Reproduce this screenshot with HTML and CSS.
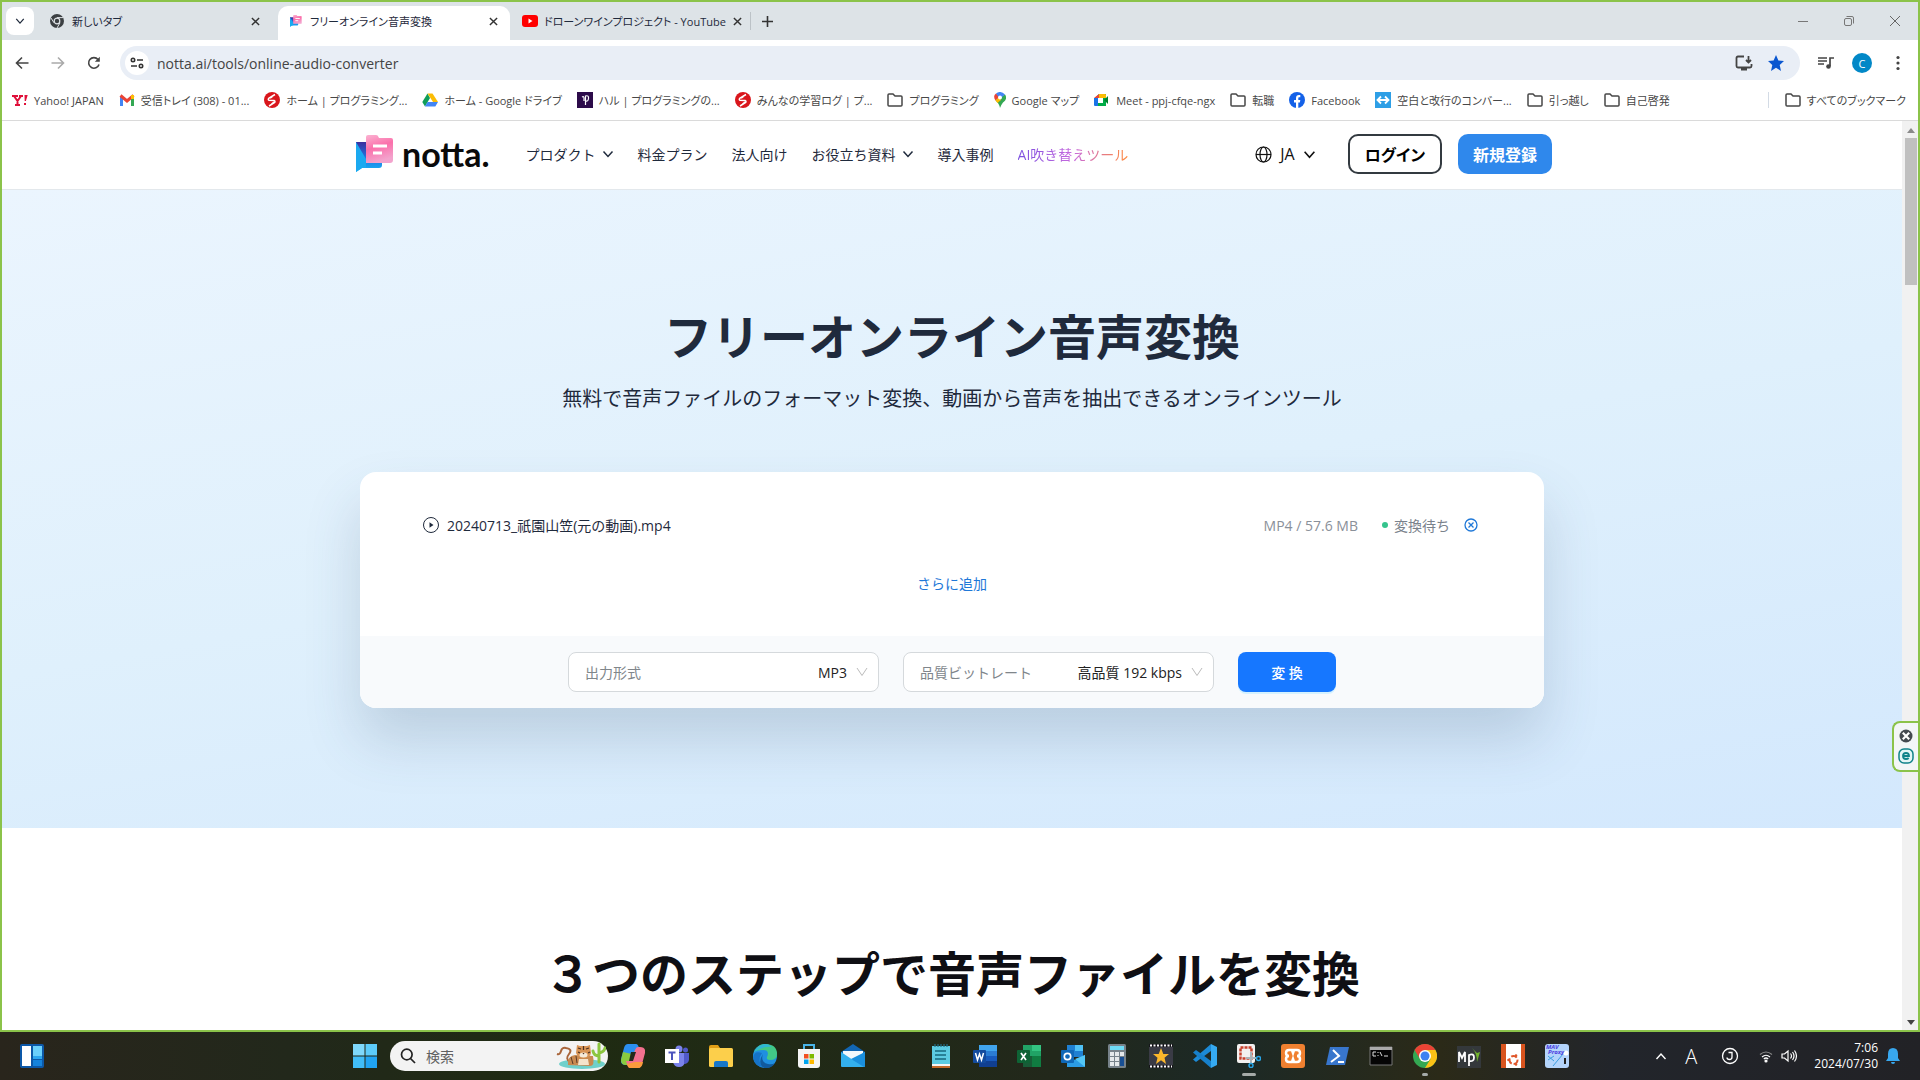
FILE: index.html
```html
<!DOCTYPE html>
<html lang="ja">
<head>
    <meta charset="UTF-8">
    <meta name="viewport" content="width=device-width, initial-scale=1.0">
    <title>フリーオンライン音声変換</title>
    <link rel="stylesheet" href="styles.css">
</head>
<body>
    <svg class="defs" aria-hidden="true">
        <symbol id="i-close" viewBox="0 0 10 10"><path d="M1 1l8 8M9 1l-8 8" stroke="#333" stroke-width="1.6"/></symbol>
        <symbol id="i-chevron" viewBox="0 0 12 12"><path d="M1.500 3.500l4.500 5 4.500-5" fill="none" stroke="currentColor" stroke-width="1.500"/></symbol>
        <symbol id="i-folder" viewBox="0 0 16 16"><path d="M1 3q0-1 1-1h4l2 2h6q1 0 1 1v8q0 1-1 1H2q-1 0-1-1z" fill="none" stroke="#474747" stroke-width="1.500"/></symbol>
        <symbol id="i-progate" viewBox="0 0 16 16"><circle cx="8" cy="8" r="8" fill="#d9161c"/><path d="M11 2.500L5 6q-1.500 1.500 0 2.300l5 .2q2 1 0 2.500L5 14M8.500 4.500L6.500 6M10 10L7.500 12" fill="none" stroke="#fff" stroke-width="1.500"/></symbol>
        <symbol id="i-notta" viewBox="0 0 38 38">
            <linearGradient id="nb" x2="0" y2="1"><stop offset="0" stop-color="#3d2e9e"/><stop offset=".6" stop-color="#1d7fe8"/><stop offset="1" stop-color="#19b5f2"/></linearGradient>
            <linearGradient id="np" x2="0.300" y2="1"><stop offset="0" stop-color="#fbb3d2"/><stop offset=".5" stop-color="#fb70ab"/><stop offset="1" stop-color="#f3a3cd"/></linearGradient>
            <path d="M0 7h26v23q0 3-3 3H6l-6 4z" fill="url(#nb)"/>
            <path d="M0 7l10 17v9H6l-6 4z" fill="#1ba9f0"/>
            <path d="M10 2q0-2 2-2h8q2 0 2.500 2l.5 1h12q2 0 2 2v20q0 3-3 3H10z" fill="url(#np)"/>
            <path d="M17 11h14M17 18h9" stroke="#fff" stroke-width="3"/>
        </symbol>
    </svg>

    <div class="window">
        <div class="tabstrip">
            <button class="tab-search" aria-label="タブを検索"><svg width="10" height="10"><use href="#i-chevron"/></svg></button>
            <div class="tab">
                <svg width="14" height="14" viewBox="0 0 14 14"><circle cx="7" cy="7" r="7" fill="#3c4043"/><circle cx="7" cy="7" r="2.800" fill="#3c4043" stroke="#dfe3e7" stroke-width="1.200"/><path d="M7 3.600h6M4 8.800L1 4M10 8.800L7 14" stroke="#dfe3e7"/></svg>
                <span>新しいタブ</span>
                <button aria-label="閉じる"><svg width="9" height="9"><use href="#i-close"/></svg></button>
            </div>
            <div class="tab active">
                <svg width="12" height="12"><use href="#i-notta"/></svg>
                <span>フリーオンライン音声変換</span>
                <button aria-label="閉じる"><svg width="9" height="9"><use href="#i-close"/></svg></button>
            </div>
            <div class="tab last">
                <svg width="16" height="14" viewBox="0 0 16 14"><rect y="1" width="16" height="12" rx="3" fill="#f00"/><path d="M6.500 4.500v5l4-2.500z" fill="#fff"/></svg>
                <span>ドローンワインプロジェクト - YouTube</span>
                <button aria-label="閉じる"><svg width="9" height="9"><use href="#i-close"/></svg></button>
            </div>
            <button class="new-tab" aria-label="新しいタブ"><svg width="11" height="11" viewBox="0 0 11 11"><path d="M5.500 0v11M0 5.500h11" stroke="#333" stroke-width="1.600"/></svg></button>
            <div class="window-controls">
                <button aria-label="最小化"><svg width="12" height="12" viewBox="0 0 12 12"><path d="M1 6.500h10" stroke="#777"/></svg></button>
                <button aria-label="元に戻す"><svg width="12" height="12" viewBox="0 0 12 12" fill="none" stroke="#777"><rect x="1.500" y="3.500" width="7" height="7" rx="1.500"/><path d="M3.500 1.500H9q1.500 0 1.500 1.500v5.500"/></svg></button>
                <button aria-label="閉じる"><svg width="12" height="12" viewBox="0 0 12 12"><path d="M1 1l10 10M11 1L1 11" stroke="#666"/></svg></button>
            </div>
        </div>

        <div class="toolbar">
            <button aria-label="戻る"><svg width="14" height="14" viewBox="0 0 14 14" fill="none" stroke="#444" stroke-width="1.600"><path d="M13.500 7H1.500M7 1.500L1.500 7 7 12.500"/></svg></button>
            <button aria-label="進む"><svg width="14" height="14" viewBox="0 0 14 14" fill="none" stroke="#aaa" stroke-width="1.600"><path d="M.5 7h12M7 1.500L12.500 7 7 12.500"/></svg></button>
            <button aria-label="再読み込み"><svg width="14" height="14" viewBox="0 0 14 14"><path d="M12 8.500A5.300 5.300 0 1 1 11 3.500" fill="none" stroke="#444" stroke-width="1.600"/><path d="M12.800.8v5h-5z" fill="#444"/></svg></button>
            <div class="omnibox">
                <span class="tune"><svg width="14" height="12" viewBox="0 0 14 12" fill="none" stroke="#333" stroke-width="1.600"><circle cx="3" cy="3" r="1.700"/><path d="M7 3h6M1 9h6"/><circle cx="11" cy="9" r="1.700"/></svg></span>
                <input type="text" aria-label="アドレス" value="notta.ai/tools/online-audio-converter">
                <button aria-label="インストール"><svg width="18" height="16" viewBox="0 0 18 16" fill="none" stroke="#444" stroke-width="1.800"><path d="M9 1.500H3q-1.500 0-1.500 1.500v8q0 1.500 1.500 1.500h12q1.500 0 1.500-1.500V9M13.500 1v6M11 5l2.500 2.500L16 5M6 14.500h6"/></svg></button>
                <button aria-label="ブックマーク"><svg width="16" height="16" viewBox="0 0 16 16"><path d="M8 0l2.400 5.500 5.600.5-4.300 3.900L13 16 8 12.700 3 16l1.300-6.100L0 6l5.600-.5z" fill="#0b57d0"/></svg></button>
            </div>
            <button aria-label="メディア"><svg width="16" height="14" viewBox="0 0 16 14"><path d="M0 2h9M0 5h9M0 8h6M12 10V2h4" fill="none" stroke="#444" stroke-width="1.700"/><circle cx="10.500" cy="10.500" r="2.300" fill="#444"/></svg></button>
            <button class="avatar">C</button>
            <button class="menu" aria-label="メニュー"><svg width="4" height="16" viewBox="0 0 4 16" fill="#444"><circle cx="2" cy="2.500" r="1.600"/><circle cx="2" cy="8" r="1.600"/><circle cx="2" cy="13.500" r="1.600"/></svg></button>
        </div>

        <nav class="bookmarks">
            <a href="#"><svg width="16" height="16" viewBox="0 0 16 16"><path d="M0 4h6M2 4l3.500 5L9 4M7 4h4M5.500 8v5M3 13h5" fill="none" stroke="#e0103a" stroke-width="2"/><path d="M12.500 3h3.200l-1.800 6h-1.200zM12 11h2v2h-2z" fill="#e0103a"/></svg>Yahoo! JAPAN</a>
            <a href="#"><svg width="16" height="16" viewBox="0 0 16 16" fill="none" stroke-width="3"><path d="M2.500 14V4" stroke="#4285f4"/><path d="M13.500 14V4" stroke="#34a853"/><path d="M1.500 3.500L8 9l6.500-5.500" stroke="#ea4335"/><path d="M13.500 3v4" stroke="#fbbc04"/></svg>受信トレイ (308) - 01...</a>
            <a href="#"><svg width="16" height="16"><use href="#i-progate"/></svg>ホーム | プログラミング...</a>
            <a href="#"><svg width="16" height="16" viewBox="0 0 16 16"><path d="M5.500 1.500L8 6 3 14.500.3 10z" fill="#0f9d58"/><path d="M5.500 1.500h5L16 10h-5z" fill="#fbbc04"/><path d="M5.500 10H16l-2.700 4.500H3z" fill="#4285f4"/></svg>ホーム - Google ドライブ</a>
            <a href="#"><svg width="16" height="16" viewBox="0 0 16 16"><path d="M0 0h16v16H0z" fill="#2c0b4a"/><path d="M5 5q2-1 2 1v3m1.500 4V4Q12 3 11.500 6.500T8.500 9" fill="none" stroke="#fff" stroke-width="1.200"/></svg>ハル | プログラミングの...</a>
            <a href="#"><svg width="16" height="16"><use href="#i-progate"/></svg>みんなの学習ログ | プ...</a>
            <a href="#"><svg width="16" height="16"><use href="#i-folder"/></svg>プログラミング</a>
            <a href="#"><svg width="12" height="16" viewBox="0 0 12 16"><path d="M6 16Q5 11 1.500 8.500L6 5l5-2.500Q14 7 9 10.500 7 13 6 16z" fill="#34a853"/><path d="M1.500 8.500Q-1.500 4 2 1.500L6 5z" fill="#ea4335"/><path d="M2 1.500Q6.500-2 11 2.500L6 7z" fill="#4285f4"/><path d="M1.500 8.500L5 5l2 3-3.500 3z" fill="#fbbc04"/><circle cx="6" cy="5.500" r="2" fill="#fff"/></svg>Google マップ</a>
            <a href="#"><svg width="16" height="16" viewBox="0 0 16 16"><path d="M5 2h7v12H1V6z" fill="#00ac47"/><path d="M0 6h4v8H1q-1 0-1-1z" fill="#1a73e8"/><path d="M5 2v4H0z" fill="#ea4335"/><path d="M5 2h6q1 0 1 1v3H5z" fill="#fbbc04"/><path d="M4 6h5v5H4z" fill="#fff"/><path d="M10 8l4-4v8z" fill="#00832d"/></svg>Meet - ppj-cfqe-ngx</a>
            <a href="#"><svg width="16" height="16"><use href="#i-folder"/></svg>転職</a>
            <a href="#"><svg width="16" height="16" viewBox="0 0 16 16"><circle cx="8" cy="8" r="8" fill="#1461e8"/><path d="M7 16v-5.500H5V8h2V6.200Q7 3 10 3h1.300v2.200H10Q9.300 5.200 9.300 6v2h2l-.4 2.500H9.300V16z" fill="#fff"/></svg>Facebook</a>
            <a href="#"><svg width="16" height="16" viewBox="0 0 16 16"><path d="M0 0h16v16H0z" fill="#2e9fe6"/><path d="M3 8h10M6 4.500L2.500 8 6 11.500M10 4.500L13.500 8 10 11.500" fill="none" stroke="#fff" stroke-width="1.800"/></svg>空白と改行のコンバー...</a>
            <a href="#"><svg width="16" height="16"><use href="#i-folder"/></svg>引っ越し</a>
            <a href="#"><svg width="16" height="16"><use href="#i-folder"/></svg>自己啓発</a>
            <a href="#" class="all"><svg width="16" height="16"><use href="#i-folder"/></svg>すべてのブックマーク</a>
        </nav>

        <div class="viewport">
            <div class="page">
                <header class="site-header">
                    <div class="header-inner">
                        <a href="#" class="logo"><svg width="38" height="38"><use href="#i-notta"/></svg>notta.</a>
                        <nav class="site-nav">
                            <a href="#">プロダクト<svg width="12" height="12"><use href="#i-chevron"/></svg></a>
                            <a href="#">料金プラン</a>
                            <a href="#">法人向け</a>
                            <a href="#">お役立ち資料<svg width="12" height="12"><use href="#i-chevron"/></svg></a>
                            <a href="#">導入事例</a>
                            <a href="#" class="dubbing">AI吹き替えツール</a>
                        </nav>
                        <button class="lang"><svg width="17" height="17" viewBox="0 0 17 17" fill="none" stroke="#111" stroke-width="1.200"><circle cx="8.500" cy="8.500" r="7.500"/><ellipse cx="8.500" cy="8.500" rx="3.500" ry="7.500"/><path d="M1 8.500h15"/></svg>JA<svg width="13" height="13"><use href="#i-chevron"/></svg></button>
                        <button class="btn login">ログイン</button>
                        <button class="btn signup">新規登録</button>
                    </div>
                </header>

                <section class="hero">
                    <h1>フリーオンライン音声変換</h1>
                    <p class="lead">無料で音声ファイルのフォーマット変換、動画から音声を抽出できるオンラインツール</p>
                    <div class="card">
                        <div class="file-row">
                            <svg width="18" height="18" viewBox="0 0 18 18"><circle cx="9" cy="9" r="7.500" fill="none" stroke="#1f2a3c"/><path d="M7.500 6.300v5.400l4-2.700z" fill="#1f2a3c"/></svg>
                            <span class="file-name">20240713_祇園山笠(元の動画).mp4</span>
                            <span class="file-size">MP4 / 57.6 MB</span>
                            <span class="status">変換待ち</span>
                            <button class="remove" aria-label="削除"><svg width="14" height="14" viewBox="0 0 14 14" fill="none" stroke="#1f78d8" stroke-width="1.300"><circle cx="7" cy="7" r="6"/><path d="M4.500 4.500l5 5M9.500 4.500l-5 5"/></svg></button>
                        </div>
                        <button class="add-more">さらに追加</button>
                        <div class="options">
                            <div class="field">
                                <label for="format">出力形式</label>
                                <select id="format"><option>MP3</option></select>
                                <svg width="12" height="12" viewBox="0 0 12 12"><path d="M1 2l5 7.500L11 2" fill="none" stroke="#bbb"/></svg>
                            </div>
                            <div class="field">
                                <label for="bitrate">品質ビットレート</label>
                                <select id="bitrate"><option>高品質 192 kbps</option></select>
                                <svg width="12" height="12" viewBox="0 0 12 12"><path d="M1 2l5 7.500L11 2" fill="none" stroke="#bbb"/></svg>
                            </div>
                            <button class="convert">変 換</button>
                        </div>
                    </div>
                </section>

                <section class="steps">
                    <h2>３つのステップで音声ファイルを変換</h2>
                </section>
            </div>
            <div class="scrollbar">
                <svg width="8" height="5" viewBox="0 0 8 5"><path d="M4 0l4 5H0z" fill="#8a8a8a"/></svg>
                <div class="thumb"></div>
                <svg width="8" height="5" viewBox="0 0 8 5"><path d="M0 0h8L4 5z" fill="#444"/></svg>
            </div>
        </div>

        <div class="side-widget">
            <svg width="14" height="14" viewBox="0 0 14 14"><circle cx="7" cy="7" r="6.500" fill="#444a50"/><path d="M3.800 3.800l6.400 6.400M10.200 3.800l-6.400 6.400" stroke="#fff" stroke-width="2.200"/></svg>
            <svg width="16" height="16" viewBox="0 0 16 16"><rect x="1" y="1" width="14" height="14" rx="5" fill="#e4f6f6" stroke="#10838a" stroke-width="1.500"/><path d="M5 8h6Q11 5 8 5T5 8t3 3q1.700 0 2.700-1" fill="none" stroke="#10838a" stroke-width="1.800"/></svg>
        </div>
    </div>

    <footer class="taskbar">
        <div class="task-left">
            <svg width="24" height="24" viewBox="0 0 24 24"><rect width="24" height="24" rx="2" fill="#0c58a8"/><path d="M2 2h9v20H2z" fill="#fff"/><path d="M13 2h9v10h-9z" fill="#6bd0fb"/><path d="M13 12h9v3h-9z" fill="#2da7f0"/><path d="M13 16h9v6h-9z" fill="#1583dc"/></svg>
        </div>
        <div class="task-apps">
            <button class="app" aria-label="スタート"><svg width="24" height="24" viewBox="0 0 24 24"><path d="M0 0h11.500v11.500H0z" fill="#7fd8fb"/><path d="M12.500 0H24v11.500H12.500z" fill="#5ccbfa"/><path d="M0 12.500h11.500V24H0z" fill="#41bdf8"/><path d="M12.500 12.500H24V24H12.500z" fill="#20a4f3"/></svg></button>
            <div class="task-search">
                <svg width="16" height="16" viewBox="0 0 16 16" fill="none" stroke="#222" stroke-width="1.700"><circle cx="6.800" cy="6.500" r="5.300"/><path d="M10.500 10.500l4.500 4.500"/></svg>
                <input type="search" aria-label="検索" placeholder="検索">
                <svg width="50" height="28" viewBox="0 0 50 28">
                    <ellipse cx="26" cy="22" rx="23" ry="5" fill="#6fd0cb"/>
                    <path d="M43 20V2M43 14q-5 0-6-5M43 11q5-1 6-5" fill="none" stroke="#8cc63f" stroke-width="3" stroke-linecap="round"/>
                    <path d="M14 20Q9 17 13 12t-3-6Q6 5 5 9t-4 3" fill="none" stroke="#a9653a" stroke-width="2"/>
                    <path d="M12 23q-1-9 7-10l18 1q2 10-3 10z" fill="#c98a50"/>
                    <path d="M15 15l2 7M20 14l1 7" stroke="#5b3a26"/>
                    <path d="M21 3l3 1h7l3-1 1 8q-1 5-7 5t-8-5z" fill="#d89455"/>
                    <path d="M22 6l3 1M33 6l-3 1M27.500 4v4M22 10l2 1M34 10l-2 1" stroke="#4b3020" stroke-width="1.200"/>
                    <ellipse cx="27.500" cy="13" rx="4" ry="2.500" fill="#f5ead9"/><path d="M26.500 11h2l-1 1.500z" fill="#4b3020"/>
                    <path d="M23 17h9l1 6H22z" fill="#f5e3cb"/>
                </svg>
            </div>
            <button class="app" aria-label="Copilot"><svg width="24" height="24" viewBox="0 0 24 24"><path d="M7 0h8q2 0 3 4l1 3h-3q-2 0-3 3l-3 8q-1 3-3 3H5q-6 0-5-6L3 4q1-4 4-4z" fill="#2b8ff0"/><path d="M2 8L0 16q0 5 5 5h3l3-11z" fill="#8acb3f"/><path d="M17 24H9q-2 0-3-4l-1-3h3q2 0 3-3l3-8q1-3 3-3h2q6 0 5 6l-3 11q-1 4-4 4z" fill="#f3708f"/><path d="M17 24H9q-2 0-3-4l8-2 8 0q-1 6-5 6z" fill="#fb9b3c"/><path d="M10 8h5l-3 9H8z" fill="#24291b"/></svg></button>
            <button class="app" aria-label="Teams"><svg width="24" height="24" viewBox="0 0 24 24"><circle cx="14" cy="5" r="3.500" fill="#7b83eb"/><circle cx="20.500" cy="6" r="2.500" fill="#5059c9"/><path d="M10 9h10v9q-1 5-6 5t-6-5z" fill="#7b83eb"/><path d="M19 9h5v7q-1 4-5 4z" fill="#5059c9"/><path d="M0 5h14v14H0z" fill="#fff"/><path d="M3.500 8.500h7M7 8.500V16" stroke="#4b53bc" stroke-width="2"/></svg></button>
            <button class="app" aria-label="エクスプローラー"><svg width="24" height="24" viewBox="0 0 24 24"><path d="M0 3q0-2 2-2h7l2 3v4H0z" fill="#e2a017"/><rect y="4" width="24" height="19" rx="1.500" fill="#fccf4b"/><path d="M5 23v-4q0-2 2-2h10q2 0 2 2v4z" fill="#1877c9"/></svg></button>
            <button class="app" aria-label="Edge"><svg width="24" height="24" viewBox="0 0 24 24"><circle cx="12" cy="12" r="12" fill="#1f8fe0"/><path d="M1 8Q5 0 12 0q12 0 12 10 0 6-7 6-4 0-3-3 3-7-4-7T1 8z" fill="#42c987"/><path d="M1 8q4-7 11-8 4 0 7 3Q10 2 1 8z" fill="#2fb6d4"/><path d="M9 9q-6 8 2 14Q2 23 0 14q1-8 9-5z" fill="#1673c8"/><path d="M10 10q-3 8 5 10 4 1 7-1-4 6-11 5-7-5-1-14z" fill="#115a9e"/></svg></button>
            <button class="app" aria-label="ストア"><svg width="24" height="24" viewBox="0 0 24 24"><path d="M7 6V1h10v5" fill="none" stroke="#49b4e8" stroke-width="2"/><path d="M1 5h22v16q0 3-3 3H4q-3 0-3-3z" fill="#f5f5f5"/><path d="M7 10h4.500v4.500H7z" fill="#f25022"/><path d="M12.500 10H17v4.500h-4.500z" fill="#7fba00"/><path d="M7 15.500h4.500V20H7z" fill="#00a4ef"/><path d="M12.500 15.500H17V20h-4.500z" fill="#ffb900"/></svg></button>
            <button class="app" aria-label="メール"><svg width="24" height="24" viewBox="0 0 24 24"><path d="M12 0l12 8v6H0V8z" fill="#1266b3"/><path d="M2 7h20v9H2z" fill="#f3f8fc"/><path d="M0 8l12 8 12-8v14q0 1-1 1H1q-1 0-1-1z" fill="#33b0ee"/><path d="M24 8v14q0 1-1 1L10 15z" fill="#1a8fdd"/></svg></button>
            <span class="app"></span>
            <button class="app" aria-label="メモ帳"><svg width="24" height="24" viewBox="0 0 24 24"><path d="M3 2h18v19H3z" fill="#5ccbe2"/><path d="M3 20h18v2H3z" fill="#f5f5f5"/><path d="M3 22h18v2H3z" fill="#c56a2a"/><path d="M6 0v3M9 0v3M12 0v3M15 0v3M18 0v3" stroke="#226e85" stroke-width="1.200"/><path d="M6 7h11M6 11h11M6 15h11" stroke="#17697f" stroke-width="1.600"/></svg></button>
            <button class="app" aria-label="Word"><svg width="24" height="24" viewBox="0 0 24 24"><path d="M6 1h18v7H6z" fill="#41a5ee"/><path d="M6 7h18v6H6z" fill="#2b7cd3"/><path d="M6 12h18v6H6z" fill="#185abd"/><path d="M6 17h18v6H6z" fill="#103f91"/><rect y="6" width="13" height="13" rx="1" fill="#134b9e"/><path d="M2.500 9l2 7 2-6 2 6 2-7" fill="none" stroke="#fff" stroke-width="1.500"/></svg></button>
            <button class="app" aria-label="Excel"><svg width="24" height="24" viewBox="0 0 24 24"><path d="M6 1h18v22H6z" fill="#21a366"/><path d="M15 1h9v6h-9z" fill="#33c481"/><path d="M6 12h9v11H6z" fill="#185c37"/><path d="M15 12h9v11h-9z" fill="#107c41"/><rect y="6" width="13" height="13" rx="1" fill="#0e6335"/><path d="M4 9l5 7M9 9l-5 7" stroke="#fff" stroke-width="1.700"/></svg></button>
            <button class="app" aria-label="Outlook"><svg width="24" height="24" viewBox="0 0 24 24"><path d="M6 1h16v12H6z" fill="#1f80d2"/><path d="M14 1h8v6h-8z" fill="#4fc1f5"/><path d="M6 10l8 6 10-5v11q0 1-1 1H6z" fill="#2b9ce5"/><path d="M14 15l10-4v12z" fill="#53c6f5"/><rect y="6" width="13" height="13" rx="1" fill="#0f68b8"/><circle cx="6.500" cy="12.500" r="3.200" fill="none" stroke="#fff" stroke-width="1.700"/></svg></button>
            <button class="app" aria-label="電卓"><svg width="24" height="24" viewBox="0 0 24 24"><rect x="3" width="18" height="24" rx="1.500" fill="#77828a"/><path d="M5 2h14v4H5z" fill="#6edcf7"/><path d="M5 8h4v4H5zM10 8h4v4h-4zM15 8h4v4h-4zM5 13h4v4H5zM10 13h4v4h-4zM5 18h4v4H5zM10 18h4v4h-4z" fill="#e4e8ea"/><path d="M15 13h4v9h-4z" fill="#184f94"/></svg></button>
            <button class="app" aria-label="ムービー"><svg width="24" height="24" viewBox="0 0 24 24"><path d="M0 0h24v24H0z" fill="#15151a"/><path d="M0 3h24v18H0z" fill="#3a3b45"/><path d="M1 1.500h22M1 22.500h22" stroke="#fff" stroke-width="2" stroke-dasharray="2 1.500"/><path d="M12 4l2.300 6H20l-4.500 3.800L17 20l-5-3.700L7 20l1.500-6.200L4 10h5.700z" fill="#fcb72b"/></svg></button>
            <button class="app" aria-label="VS Code"><svg width="24" height="24" viewBox="0 0 24 24"><path d="M18 0l6 3v18l-6 3V7z" fill="#35aaf2"/><path d="M18 0v7L3 18l-3-2.500z" fill="#1c8ad6"/><path d="M18 24v-7L3 6 0 8.500z" fill="#1780cb"/></svg></button>
            <button class="app running focused" aria-label="Snipping Tool"><svg width="24" height="24" viewBox="0 0 24 24"><rect width="18" height="19" rx="2" fill="#f3f1f0"/><rect x="3.500" y="3.500" width="11" height="11" fill="none" stroke="#c8402c" stroke-width="2.500" stroke-dasharray="3 1"/><path d="M14 8v12M9 14h11" stroke="#aab3b9" stroke-width="2"/><circle cx="14" cy="21.500" r="2" fill="none" stroke="#28a4e6" stroke-width="1.500"/><circle cx="21.500" cy="14.500" r="2" fill="none" stroke="#28a4e6" stroke-width="1.500"/></svg></button>
            <button class="app" aria-label="XAMPP"><svg width="24" height="24" viewBox="0 0 24 24"><rect width="24" height="24" rx="3" fill="#f08030"/><path d="M8 6h3l1 3 1-3h3q3 0 3 3t-3 3q3 0 3 3t-3 3h-3l-1-3-1 3H8q-3 0-3-3t3-3q-3 0-3-3t3-3z" fill="none" stroke="#fff" stroke-width="2.500"/></svg></button>
            <button class="app" aria-label="PowerShell"><svg width="24" height="24" viewBox="0 0 24 24"><path d="M5 3h19l-4 18H1z" fill="#3876cc"/><path d="M8 6l6 6-8 6M13 18h6" fill="none" stroke="#fff" stroke-width="2"/></svg></button>
            <button class="app" aria-label="コマンドプロンプト"><svg width="24" height="24" viewBox="0 0 24 24"><path d="M1 3h22v18H1z" fill="#050505" stroke="#777"/><path d="M1 3h22v3H1z" fill="#aaa"/><path d="M7 8H4v4h3M9 8v1M9 11v1M11 8l2 4M15 12h4" fill="none" stroke="#ddd"/></svg></button>
            <button class="app running" aria-label="Chrome"><svg width="24" height="24" viewBox="0 0 24 24"><circle cx="12" cy="12" r="12" fill="#34a853"/><path d="M1.600 6A12 12 0 0 1 22.400 6H12L7 15z" fill="#ea4335"/><path d="M22.400 6A12 12 0 0 1 12 24l5.500-9L12 6z" fill="#fbc116"/><circle cx="12" cy="12" r="6" fill="#fff"/><circle cx="12" cy="12" r="4.500" fill="#3e82f1"/></svg></button>
            <button class="app" aria-label="Mission Planner"><svg width="24" height="24" viewBox="0 0 24 24"><path d="M0 2h24v22H0z" fill="#34383b"/><path d="M15 4q5 5 5 14l3-10-3 1z" fill="#71b32c"/><path d="M2 18V8l3 6 3-6v10M12 22V11q5-2 5 2.500T12 17" fill="none" stroke="#fff" stroke-width="1.800"/></svg></button>
            <button class="app" aria-label="Ubuntu"><svg width="24" height="24" viewBox="0 0 24 24"><path d="M0 0h24v24H0z" fill="#d9541e"/><path d="M5 0h15v24H5z" fill="#fff"/><circle cx="12.500" cy="16" r="4" fill="none" stroke="#e0562a" stroke-width="2" stroke-dasharray="6 2"/><circle cx="7.500" cy="16" r="1.300" fill="#e0562a"/><circle cx="15" cy="11.500" r="1.300" fill="#e0562a"/><circle cx="15" cy="20.500" r="1.300" fill="#e0562a"/></svg></button>
            <button class="app" aria-label="MAV Proxy"><svg width="24" height="24" viewBox="0 0 24 24"><rect width="24" height="24" rx="3" fill="#b4d4fb"/><path d="M3 16l6-4M3 12l6 5M8 22L18 10" stroke="#3b9de0"/><path d="M19 14h2v6h-2z" fill="#222"/><circle cx="21" cy="9" r="2.500" fill="#fff"/><text x="1" y="5" class="mav">MAV</text><text x="3" y="10" class="mav">Proxy</text></svg></button>
        </div>
        <div class="task-tray">
            <svg width="12" height="12" viewBox="0 0 12 12"><path d="M1.500 9L6 4l4.500 5" fill="none" stroke="#fff" stroke-width="1.400"/></svg>
            <span class="ime">A</span>
            <svg width="18" height="18" viewBox="0 0 18 18" fill="none" stroke="#fff" stroke-width="1.300"><circle cx="9" cy="9" r="7.500"/><path d="M7.500 5.500H11V10q0 2.500-2.500 2.500T6 10.500"/></svg>
            <svg width="14" height="14" viewBox="0 0 14 14" fill="none" stroke="#fff" stroke-width="1.200"><path d="M1 5.500q6-5 12 0" stroke="#888"/><path d="M3 8q4-3.500 8 0M4.800 10q2.200-2 4.400 0"/><circle cx="7" cy="12" r="1" fill="#fff"/></svg>
            <svg width="17" height="14" viewBox="0 0 17 14" fill="none" stroke="#fff" stroke-width="1.200"><path d="M1 5h2.500L7 2v10L3.500 9H1zM9.500 4.500q2 2.500 0 5M11.500 3q3 4 0 8M13.500 1.500q4 5.500 0 11"/></svg>
            <div class="clock"><span>7:06</span><span>2024/07/30</span></div>
            <svg width="14" height="16" viewBox="0 0 14 16"><path d="M7 0q5 0 5 6v4l2 3H0l2-3V6q0-6 5-6zM5 14h4q0 2-2 2t-2-2z" fill="#38a7ee"/></svg>
        </div>
    </footer>
</body>
</html>
```

FILE: styles.css
```css
* {
    box-sizing: border-box;
}
body {
    margin: 0;
    height: 100vh;
    display: flex;
    flex-direction: column;
    overflow: hidden;
    font-family: "Open Sans", "Noto Sans CJK JP", sans-serif;
    font-size: 14px;
    color: #1f2a3c;
}
button {
    display: flex;
    align-items: center;
    justify-content: center;
    padding: 0;
    border: none;
    background: none;
    color: inherit;
    font: inherit;
    cursor: pointer;
}
a {
    color: inherit;
    text-decoration: none;
}
svg {
    flex: none;
}
.defs {
    position: absolute;
    width: 0;
    height: 0;
}

/* browser window */
.window {
    flex: 1;
    min-height: 0;
    position: relative;
    display: flex;
    flex-direction: column;
    border: 2px solid #8bc34a;
    background: #fff;
}
.tabstrip {
    display: flex;
    align-items: center;
    height: 38px;
    padding: 4px 0 0 4px;
    background: #dde3e7;
    font-size: 11px;
    font-feature-settings: "palt";
}
.tab-search {
    width: 28px;
    height: 28px;
    margin: 0 4px 4px 0;
    border-radius: 8px;
    background: #fff;
}
.tab {
    display: flex;
    align-items: center;
    gap: 8px;
    width: 240px;
    height: 34px;
    padding: 0 18px 4px 12px;
}
.tab span {
    flex: 1;
    white-space: nowrap;
}
.tab.active {
    width: 232px;
    padding-right: 12px;
    border-radius: 10px 10px 0 0;
    background: #fff;
}
.tab.last {
    gap: 6px;
    padding-right: 8px;
}
.new-tab {
    width: 34px;
    height: 18px;
    margin-bottom: 4px;
    border-left: 1px solid #bcc2c7;
}
.window-controls {
    display: flex;
    margin: 0 0 4px auto;
}
.window-controls button {
    width: 46px;
    height: 30px;
}
.toolbar {
    display: flex;
    align-items: center;
    height: 46px;
    padding: 0 2px;
}
.toolbar > button {
    width: 36px;
    height: 34px;
}
.omnibox {
    flex: 1;
    display: flex;
    align-items: center;
    gap: 8px;
    height: 34px;
    margin: 0 8px;
    padding: 0 12px 0 5px;
    border-radius: 17px;
    background: #e9eef6;
}
.omnibox input {
    flex: 1;
    padding: 0;
    border: none;
    background: none;
    outline: none;
    color: #444;
    font: inherit;
}
.omnibox button {
    width: 24px;
    height: 24px;
}
.tune {
    display: flex;
    align-items: center;
    justify-content: center;
    width: 24px;
    height: 24px;
    border-radius: 50%;
    background: #fff;
}
.toolbar .avatar {
    width: 20px;
    height: 20px;
    margin: 0 8px;
    border-radius: 50%;
    background: #0288c7;
    color: #fff;
    font-size: 11px;
}
.bookmarks {
    display: flex;
    align-items: center;
    gap: 15px;
    height: 35px;
    padding: 0 12px 6px 10px;
    border-bottom: 1px solid #dadada;
    color: #474747;
    font-size: 11px;
    font-feature-settings: "palt";
    white-space: nowrap;
}
.bookmarks a {
    display: flex;
    align-items: center;
    gap: 6px;
}
.bookmarks .all {
    margin-left: auto;
    padding-left: 16px;
    border-left: 1px solid #d3dbe5;
}

/* page */
.viewport {
    flex: 1;
    min-height: 0;
    display: flex;
}
.page {
    flex: 1;
    overflow: hidden;
}
.site-header {
    border-bottom: 1px solid #e3e8ec;
}
.header-inner {
    display: flex;
    align-items: center;
    max-width: 1200px;
    height: 68px;
    margin: 0 auto;
    padding: 0 0 2px 4px;
}
.logo {
    display: flex;
    align-items: center;
    gap: 8px;
    color: #0a0a0a;
    font-family: Lato, sans-serif;
    font-size: 34px;
    font-weight: bold;
    line-height: 38px;
}
.site-nav {
    display: flex;
    gap: 24px;
    margin: 0 auto 0 36px;
}
.site-nav a {
    display: flex;
    align-items: center;
    gap: 6px;
}
.site-nav .dubbing {
    background: linear-gradient(90deg, #7b4fe0, #c76ade 50%, #ff8a3c);
    background-clip: text;
    color: transparent;
}
.lang {
    gap: 8px;
    margin-right: 32px;
    color: #111;
    font-size: 16px;
}
.btn {
    height: 40px;
    padding: 0 15px;
    border-radius: 10px;
    font-size: 16px;
    font-weight: bold;
}
.login {
    margin-right: 16px;
    border: 2px solid #333a40;
    color: #000;
    font-feature-settings: "palt";
}
.signup {
    background: #2f88ec;
    color: #fff;
}
.hero {
    height: 638px;
    padding-top: 111px;
    background: linear-gradient(170deg, #ebf5fe, #dff0fc 50%, #d3e8fd);
    text-align: center;
}
h1,
h2 {
    margin: 0;
    font-size: 48px;
    line-height: 72px;
}
.lead {
    margin: 8px 0 55px;
    font-size: 20px;
    line-height: 36px;
}
.card {
    max-width: 1184px;
    margin: 0 auto;
    border-radius: 16px;
    background: #fff;
    box-shadow: 0 32px 56px rgba(60, 85, 115, 0.2);
}
.file-row {
    display: flex;
    align-items: center;
    padding: 38px 66px 0 62px;
    height: 68px;
}
.file-name {
    margin: 0 auto 0 7px;
}
.file-size {
    margin-right: 24px;
    color: #8a9099;
}
.status {
    display: flex;
    align-items: center;
    gap: 6px;
    color: #7a828c;
}
.status::before {
    content: "";
    width: 6px;
    height: 6px;
    border-radius: 50%;
    background: #35c48d;
}
.remove {
    margin-left: 14px;
}
.add-more {
    margin: 27px auto 37px;
    height: 32px;
    color: #1f78d8;
}
.options {
    display: flex;
    justify-content: center;
    gap: 24px;
    padding: 16px;
    border-radius: 0 0 16px 16px;
    background: #f8fafc;
}
.field {
    display: flex;
    align-items: center;
    width: 311px;
    height: 40px;
    padding: 0 10px 0 16px;
    border: 1px solid #d5d9dc;
    border-radius: 8px;
    background: #fff;
}
.field label {
    color: #80868b;
}
.field select {
    flex: 1;
    margin-right: 9px;
    border: none;
    background: none;
    appearance: none;
    color: #222;
    font: inherit;
    text-align-last: right;
}
.convert {
    width: 98px;
    height: 40px;
    border-radius: 8px;
    background: #1677ff;
    color: #fff;
    font-weight: 500;
    box-shadow: 0 2px 0 #d5f2ff;
}
.steps {
    padding-top: 110px;
    text-align: center;
    color: #0f0f14;
}
.scrollbar {
    display: flex;
    flex-direction: column;
    align-items: center;
    width: 16px;
    padding: 7px 0 5px 2px;
    background: #f1f1f1;
}
.scrollbar .thumb {
    width: 12px;
    height: 147px;
    margin: 5px 0 auto;
    background: #c0c0c0;
}
.side-widget {
    position: absolute;
    right: 0;
    top: 719px;
    display: flex;
    flex-direction: column;
    align-items: center;
    justify-content: space-around;
    width: 26px;
    height: 51px;
    padding: 4px 0;
    border: 2px solid #8bc34a;
    border-right: none;
    border-radius: 8px 0 0 8px;
    background: #f3f6f7;
}

/* taskbar */
.taskbar {
    display: grid;
    grid-template-columns: 1fr auto 1fr;
    align-items: center;
    height: 48px;
    padding-left: 2px;
    background: linear-gradient(90deg, #29251c, #22281b 15%, #1f2b12 30%, #22281b 55%, #1c2926 64%, #2b2a18 75%, #22252b 84%, #222226);
    color: #fff;
}
.task-left {
    padding-left: 18px;
    line-height: 0;
}
.task-apps {
    display: flex;
    align-items: center;
}
.app {
    position: relative;
    width: 44px;
    height: 48px;
}
.running::after {
    content: "";
    position: absolute;
    bottom: 4px;
    width: 6px;
    height: 3px;
    border-radius: 2px;
    background: #a5aaa8;
}
.focused::after {
    width: 14px;
}
.mav {
    fill: #4a3be0;
    font-size: 6px;
    font-weight: bold;
    font-style: italic;
}
.task-search {
    display: flex;
    align-items: center;
    gap: 10px;
    width: 218px;
    height: 30px;
    margin: 0 3px;
    padding: 0 2px 0 10px;
    border-radius: 15px;
    background: #f3f3f3;
}
.task-search input {
    flex: 1;
    min-width: 0;
    padding: 0;
    border: none;
    background: none;
    font: inherit;
}
.task-search input::placeholder {
    color: #606060;
}
.task-tray {
    display: flex;
    align-items: center;
    justify-content: flex-end;
    gap: 8px;
    padding-right: 20px;
}
.ime {
    margin: 0 16px 0 10px;
    font-size: 20px;
    font-weight: 300;
}
.task-tray .ime + svg {
    margin-right: 12px;
}
.clock {
    display: flex;
    flex-direction: column;
    align-items: flex-end;
    margin-left: 8px;
    font-size: 12px;
    line-height: 16px;
}
```
